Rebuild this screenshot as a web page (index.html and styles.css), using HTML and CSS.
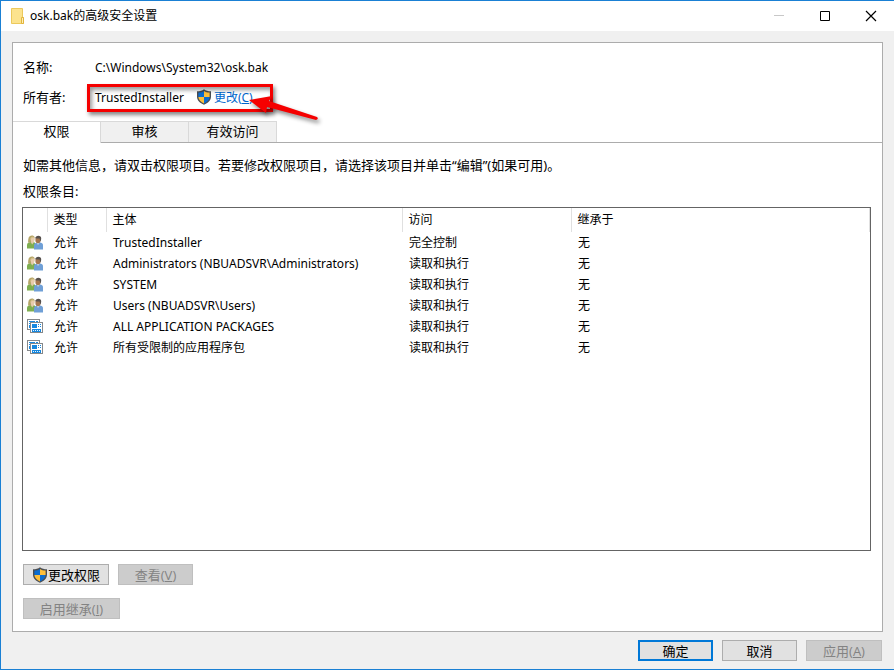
FILE: index.html
```html
<!DOCTYPE html>
<html lang="zh-CN">
<head>
<meta charset="utf-8">
<title>osk.bak的高级安全设置</title>
<link rel="stylesheet" href="styles.css">
</head>
<body>
<svg class="defs" aria-hidden="true">
  <symbol id="shield" viewBox="0 0 16 16">
    <path d="M8 .3 C6.2 1.8 3.8 2.3 1 2.3 V7.6 C1 11.6 4 14.2 8 15.8 C12 14.2 15 11.6 15 7.6 V2.3 C12.2 2.3 9.8 1.8 8 .3Z" fill="#4a4d52"/>
    <path d="M8 1.9 C6.4 3 4.6 3.5 2.4 3.6 V8 H8Z" fill="#0a6cd0"/>
    <path d="M8 1.9 C9.6 3 11.4 3.5 13.6 3.6 V8 H8Z" fill="#fdbf3a"/>
    <path d="M2.4 8 C2.6 11 4.8 13 8 14.4 V8Z" fill="#fdbf3a"/>
    <path d="M13.6 8 C13.4 11 11.2 13 8 14.4 V8Z" fill="#0a6cd0"/>
  </symbol>
  <symbol id="people" viewBox="0 0 16 16">
    <path d="M0 13.5 V10 C0 8 1.6 7.2 4 7 L7 7.2 C8.5 7.6 9 9 9 10 V13.5Z" fill="#7fae50"/>
    <path d="M3.4 6.6 L5.2 9.6 L7 6.8Z" fill="#e6cdae"/>
    <path d="M1.2 7.4 C1 5.6 1.2 2.4 2.6 1.2 C4.2 -.1 7 .2 7.6 2 L7 5.6 L3.6 7.4Z" fill="#b5a568"/>
    <ellipse cx="5.6" cy="4.5" rx="2" ry="2.7" fill="#e8ccac"/>
    <path d="M3.2 4.2 C3.4 2 5.6 1 7.6 2.6 L5.4 2.8Z" fill="#d3c084"/>
    <path d="M7 14.5 V10.5 C7 8.7 8.4 8.1 10 7.8 L13.4 7.6 C15.2 8 16 9 16 10.5 V14.5Z" fill="#6f9fd6"/>
    <path d="M9.5 7.6 L11 10 L12.8 7.4Z" fill="#c3d8ee"/>
    <ellipse cx="11" cy="4.9" rx="2.6" ry="3.3" fill="#a57750"/>
    <path d="M8.2 3.2 C8.4 .8 11.5 .1 13.2 1.2 C14.8 2.4 14.3 4.8 13.3 6.4 L12.6 3.6 C11 3.6 9.5 3.5 8.2 3.2Z" fill="#56504d"/>
  </symbol>
  <symbol id="package" viewBox="0 0 16 16">
    <path d="M.5 10.5 V.5 H12.5 V3.5 H2.5 V10.5Z" fill="#fff" stroke="#85888b"/>
    <rect x=".5" y=".5" width="12" height="10" fill="#fff" stroke="#85888b"/>
    <path d="M2 2h6v1H2zM9 2h2v1H9zM2 4h1v1H2zM2 6h1v3H2z" fill="#1989df"/>
    <rect x="3.5" y="3.5" width="12" height="10" fill="#fff" stroke="#85888b"/>
    <path d="M5 5h5v4H5zM11 5h1v1h-1zM13 5h1v1h-1zM11 7h1v1h-1zM13 7h1v1h-1zM5 10h9v3H5z" fill="#1687df"/>
    <path d="M6 11h1v1H6zM8 11h1v1H8zM10 11h1v1h-1zM12 11h1v1h-1z" fill="#e6f4ff"/>
  </symbol>
</svg>
<div class="window">
  <header class="titlebar">
    <svg class="folder" viewBox="0 0 14 16" aria-hidden="true"><path d="M.5.5h11v9h1v6H.5z" fill="#fce38e" stroke="#ecc95c"/><path d="M10.5 9.5h2v6h-2z" fill="#fff0b5" stroke="#e2b53e"/></svg>
    <h1>osk.bak的高级安全设置</h1>
    <div class="window-controls">
      <button type="button" aria-label="最小化" disabled><svg viewBox="0 0 12 12"><path d="M1 5.5h10" stroke="#c8c8c8"/></svg></button>
      <button type="button" aria-label="最大化"><svg viewBox="0 0 12 12"><path d="M1.5 1.5h9v9h-9z" stroke="#000"/></svg></button>
      <button type="button" aria-label="关闭"><svg viewBox="0 0 12 12"><path d="M1 1l10 10M11 1L1 11" stroke="#000" stroke-width="1.2"/></svg></button>
    </div>
  </header>

  <main class="panel">
    <dl class="summary">
      <div class="field"><dt>名称:</dt><dd>C:\Windows\System32\osk.bak</dd></div>
      <div class="field owner"><dt>所有者:</dt><dd><span>TrustedInstaller</span><a class="change" href="#"><svg class="shield" aria-hidden="true"><use href="#shield"/></svg>更改(<u>C</u>)</a></dd>
        <div class="callout"></div>
        <svg class="arrow" viewBox="0 0 76 36" aria-hidden="true"><path d="M3 9 L26 5 L23 10 L71 26 Q73 28 70 29 L21 16 L20 22Z" fill="#f50000"/></svg>
      </div>
    </dl>

    <div class="tabs" role="tablist">
      <button type="button" role="tab" aria-selected="true">权限</button>
      <button type="button" role="tab" aria-selected="false">审核</button>
      <button type="button" role="tab" aria-selected="false">有效访问</button>
    </div>

    <section class="content">
      <p>如需其他信息，请双击权限项目。若要修改权限项目，请选择该项目并单击“编辑”(如果可用)。</p>
      <p id="entries-label">权限条目:</p>
      <div class="list">
        <table aria-labelledby="entries-label">
          <colgroup><col class="c-icon"><col class="c-type"><col class="c-name"><col class="c-access"><col></colgroup>
          <thead><tr><th></th><th>类型</th><th>主体</th><th>访问</th><th>继承于</th></tr></thead>
          <tbody>
            <tr><td><svg><use href="#people"/></svg></td><td>允许</td><td>TrustedInstaller</td><td>完全控制</td><td>无</td></tr>
            <tr><td><svg><use href="#people"/></svg></td><td>允许</td><td>Administrators (NBUADSVR\Administrators)</td><td>读取和执行</td><td>无</td></tr>
            <tr><td><svg><use href="#people"/></svg></td><td>允许</td><td>SYSTEM</td><td>读取和执行</td><td>无</td></tr>
            <tr><td><svg><use href="#people"/></svg></td><td>允许</td><td>Users (NBUADSVR\Users)</td><td>读取和执行</td><td>无</td></tr>
            <tr><td><svg><use href="#package"/></svg></td><td>允许</td><td>ALL APPLICATION PACKAGES</td><td>读取和执行</td><td>无</td></tr>
            <tr><td><svg><use href="#package"/></svg></td><td>允许</td><td>所有受限制的应用程序包</td><td>读取和执行</td><td>无</td></tr>
          </tbody>
        </table>
      </div>
      <div class="actions">
        <button type="button" class="btn wide"><svg class="shield" aria-hidden="true"><use href="#shield"/></svg>更改权限</button>
        <button type="button" class="btn" disabled>查看(<u>V</u>)</button>
      </div>
      <div class="actions">
        <button type="button" class="btn wider" disabled>启用继承(<u>I</u>)</button>
      </div>
    </section>
  </main>

  <footer class="footer">
    <button type="button" class="btn primary">确定</button>
    <button type="button" class="btn">取消</button>
    <button type="button" class="btn apply" disabled>应用(<u>A</u>)</button>
  </footer>
</div>
</body>
</html>
```
FILE: styles.css
```css
* { box-sizing: border-box; }

body {
  margin: 0;
  font: 12px/20px "Noto Sans", "Noto Sans CJK SC", sans-serif;
  color: #000;
}

button { font: inherit; color: inherit; padding: 0; }
svg { display: block; fill: none; }
.defs { position: absolute; width: 0; height: 0; }

.window {
  display: flex;
  flex-direction: column;
  min-height: 100vh;
  background: #f0f0f0;
  border: 1px solid #1a80d4;
  border-right: 0;
}

.titlebar {
  display: flex;
  align-items: center;
  height: 30px;
  padding-left: 10px;
  background: #fff;
}
.folder { width: 14px; height: 16px; margin-right: 5px; }
h1 { flex: 1; margin: 0; font-size: 12px; font-weight: 400; }
.window-controls { display: flex; }
.window-controls button {
  display: grid;
  place-items: center;
  width: 46px;
  height: 28px;
  border: 0;
  background: none;
}
.window-controls svg { width: 12px; height: 12px; }

.panel {
  flex: 1;
  display: flex;
  flex-direction: column;
  margin: 11px 11px 0;
  background: #fff;
  border: 1px solid #acacac;
}

.summary { margin: 0; padding: 10px 10px 8px; }
.field { display: flex; align-items: center; height: 30px; }
.field dt { width: 72px; padding-bottom: 2px; font-size: 13px; line-height: 18px; }
.field dd { display: flex; margin: 0; }
.owner { position: relative; }
.change {
  display: flex;
  margin-left: 12px;
  color: #0066cc;
  text-decoration: none;
}
.shield { width: 16px; height: 16px; }
.change .shield { margin: 1px 2px 0 0; }
.callout {
  position: absolute;
  left: 64px;
  top: 1px;
  width: 186px;
  height: 28px;
  border: 3px solid #f50000;
  box-shadow: 2px 3px 4px #0007, inset 2px 3px 4px #0006;
}
.arrow {
  position: absolute;
  left: 223px;
  top: 8px;
  width: 76px;
  height: 36px;
  filter: drop-shadow(2px 3px 2px #0007);
}

.tabs { display: flex; align-items: flex-end; height: 22px; border-bottom: 1px solid #acacac; }
.tabs button {
  width: 88px;
  height: 21px;
  padding-bottom: 2px;
  border: 1px solid #d9d9d9;
  border-left: 0;
  border-bottom: 0;
  background: #f0f0f0;
  font-size: 13px;
  line-height: 16px;
}
.tabs button[aria-selected="true"] {
  height: 22px;
  margin-bottom: -1px;
  padding-bottom: 3px;
  background: #fff;
}

.content {
  flex: 1;
  display: flex;
  flex-direction: column;
  padding: 12px 11px 12px 9px;
}
.content p { margin: 0 0 6px 1px; font-size: 13px; }

.list { flex: 1; border: 1px solid #646464; }
table { width: 100%; table-layout: fixed; border-collapse: collapse; }
.c-icon { width: 24px; }
.c-type { width: 59px; }
.c-name { width: 296px; }
.c-access { width: 169px; }
th, td { padding: 0 0 0 6px; text-align: left; font-weight: 400; white-space: nowrap; }
th { height: 24px; border-right: 1px solid #e0e0e0; }
td { height: 21px; padding-left: 7px; }
td:first-child { padding-left: 4px; }
td svg { width: 16px; height: 16px; }

.actions { display: flex; gap: 9px; margin: 13px 1px 0; }
.btn {
  display: flex;
  align-items: center;
  justify-content: center;
  width: 75px;
  height: 21px;
  border: 1px solid #adadad;
  background: #e1e1e1;
  font-family: "Open Sans", "Noto Sans CJK SC", sans-serif;
  font-size: 13px;
  line-height: 18px;
}
.btn:disabled { border-color: #bfbfbf; background: #ccc; color: #838383; }
.btn.wide { width: 86px; }
.btn.wider { width: 97px; }
.btn.apply { width: 76px; }
.btn.primary { border: 2px solid #0078d7; }

.footer { display: flex; justify-content: flex-end; gap: 9px; padding: 8px 12px; }
```
